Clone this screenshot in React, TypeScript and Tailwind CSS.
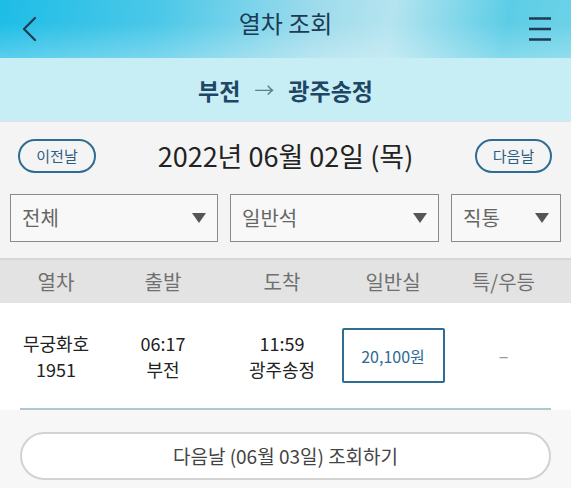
const FONT = "font-['Noto_Sans_CJK_KR','Noto_Sans',sans-serif]"

const columns = ['열차', '출발', '도착', '일반실', '특/우등']

function BackIcon() {
  return (
    <svg width="16" height="26" viewBox="0 0 16 26" fill="none">
      <path d="M14 2L3 13L14 24" stroke="#1e3a54" strokeWidth="2.2" strokeLinecap="round" strokeLinejoin="round" />
    </svg>
  )
}

function MenuIcon() {
  return (
    <svg width="24" height="24" viewBox="0 0 24 24" fill="none">
      <path d="M1 1.5H23M1 12H23M1 22.5H23" stroke="#1e3a54" strokeWidth="2.4" />
    </svg>
  )
}

function Caret() {
  return (
    <svg width="14" height="10" viewBox="0 0 14 10">
      <path d="M0 0H14L7 10Z" fill="#555" />
    </svg>
  )
}

function Select({ label, className }: { label: string; className: string }) {
  return (
    <div className={`flex h-[48px] items-center justify-between border-[1.5px] border-[#8a8a8a] bg-[#f8f8f8] pl-[11px] pr-[11px] ${className}`}>
      <span className="text-[20px] text-[#666]">{label}</span>
      <Caret />
    </div>
  )
}

function Cell({ top, bottom }: { top: string; bottom: string }) {
  return (
    <div className="flex flex-col items-center text-[18px] leading-[26px]">
      <span>{top}</span>
      <span>{bottom}</span>
    </div>
  )
}

export default function App() {
  return (
    <div className={`relative h-[488px] w-[571px] overflow-hidden bg-[#f7f7f7] ${FONT}`}>
      {/* top bar */}
      <div className="relative flex h-[58px] items-center justify-between overflow-hidden bg-[linear-gradient(100deg,#1dbde6_0%,#4cc8e8_28%,#9fdcec_55%,#b4e4ef_68%,#5ccde6_88%,#6dd2e8_100%)] px-[21px]">
        <div className="absolute inset-0 bg-[linear-gradient(180deg,rgba(255,255,255,0)_40%,rgba(255,255,255,0.25)_100%)]" />
        <div className="relative mt-[-1px]"><BackIcon /></div>
        <h1 className="absolute left-0 right-0 top-[8px] text-center text-[24px] leading-[30px] text-[#1d3a55]">열차 조회</h1>
        <div className="relative mr-[-2px] mt-[-1px]"><MenuIcon /></div>
      </div>

      {/* route */}
      <div className="flex h-[64px] items-center justify-center gap-[14px] border-b-[2px] border-[#d3e7ec] bg-[#c7eef5] pt-[2px] text-[23px] font-bold text-[#1f4665]">
        <span>부전</span>
        <span className="text-[20px] font-normal text-[#5e7f90]">→</span>
        <span>광주송정</span>
      </div>

      {/* date + filters */}
      <div className="bg-[#f4f4f4] px-[10px] pt-[17px]">
        <div className="flex items-center justify-between pl-[8px] pr-[9px]">
          <button className="h-[34px] w-[78px] rounded-full border-[2px] border-[#2f6c91] text-[15px] text-[#2b5f82]">이전날</button>
          <div className="text-[27px] leading-[30px] text-[#222]">2022년 06월 02일 (목)</div>
          <button className="h-[34px] w-[77px] rounded-full border-[2px] border-[#2f6c91] text-[15px] text-[#2b5f82]">다음날</button>
        </div>
        <div className="mt-[21px] flex gap-[12px] pb-[16px]">
          <Select label="전체" className="w-[208px]" />
          <Select label="일반석" className="w-[209px]" />
          <Select label="직통" className="flex-1" />
        </div>
      </div>

      {/* table header */}
      <div className="grid h-[45px] grid-cols-[112px_102px_136px_86px_1fr] items-center border-t-[2px] border-[#d6d6d6] bg-[#e3e3e3] text-[20px] text-[#707070]">
        {columns.map((c) => (
          <div key={c} className="text-center">{c}</div>
        ))}
      </div>

      {/* train row */}
      <div className="bg-white">
        <div className="grid h-[105px] grid-cols-[112px_102px_136px_86px_1fr] items-center text-[#222]">
          <Cell top="무궁화호" bottom="1951" />
          <Cell top="06:17" bottom="부전" />
          <Cell top="11:59" bottom="광주송정" />
          <div className="flex justify-center">
            <div className="flex h-[55px] w-[103px] shrink-0 items-center justify-center rounded-[2px] border-[2px] border-[#2f6e92] text-[16px] text-[#2d6b90]">20,100원</div>
          </div>
          <div className="text-center text-[18px] text-[#999]">–</div>
        </div>
        <div className="mx-[20px] h-[2px] bg-[#adc8ce]" />
      </div>

      {/* next day */}
      <div className="px-[20px] pt-[22px]">
        <button className="flex h-[48px] w-full items-center justify-center rounded-full border-[2px] border-[#d2d2d2] bg-white text-[19px] text-[#444]">
          다음날 (06월 03일) 조회하기
        </button>
      </div>
    </div>
  )
}
